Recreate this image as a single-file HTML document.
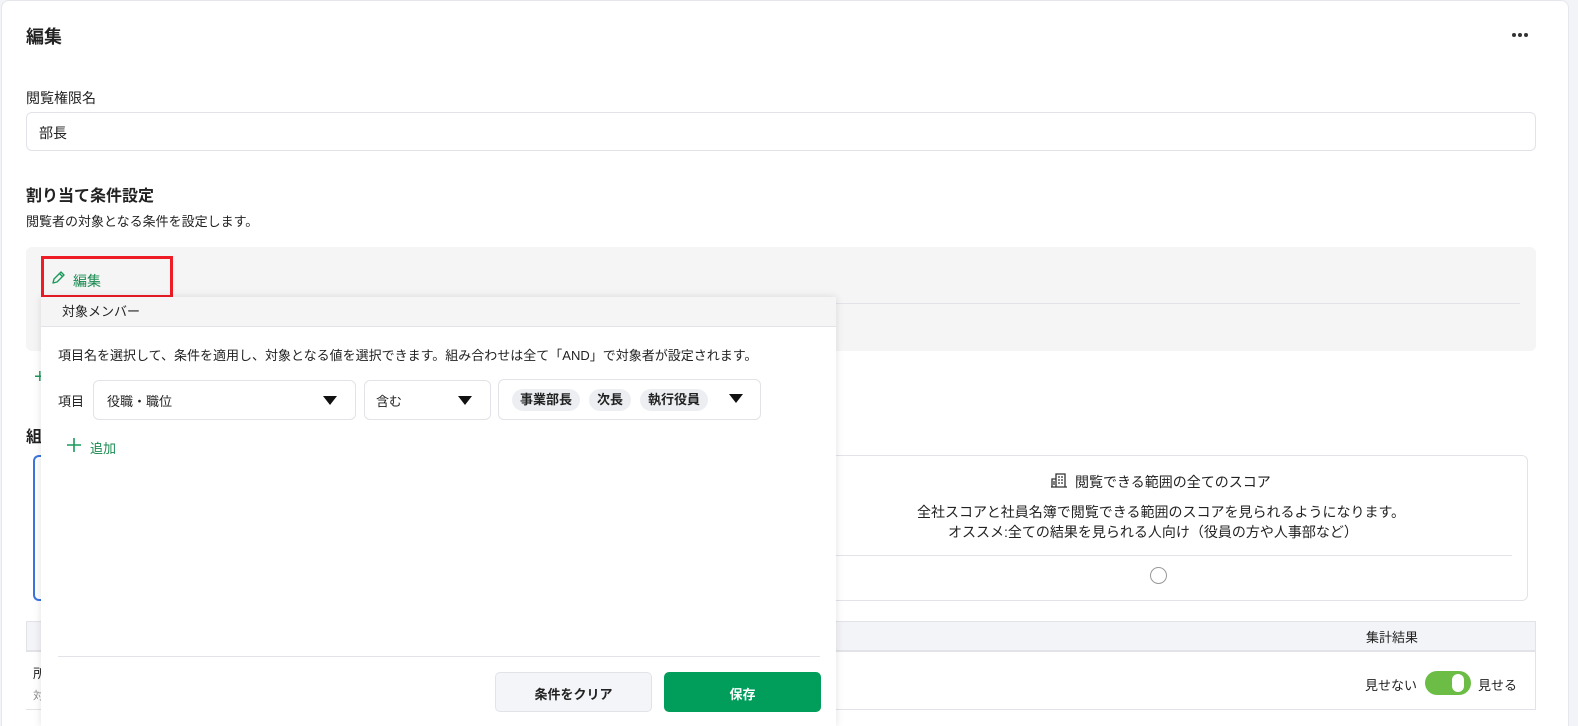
<!DOCTYPE html>
<html style="overflow:hidden;height:726px"><head><meta charset="utf-8"><style>
*{box-sizing:border-box;margin:0;padding:0}
body{width:1578px;height:726px;overflow:hidden;background:#f3f4f8;font-family:"Liberation Sans","Noto Sans CJK JP",sans-serif;color:#222;position:relative}
.a{position:absolute}
.card{left:1px;top:0;width:1568px;height:726px;background:#fff;border-radius:8px 8px 0 0;border:1px solid #e6e7ec;border-bottom:none}
.t{font-size:14px;white-space:nowrap}
</style></head><body>
<div class="a card"></div>
<div class="a t" style="left:26px;top:23px;font-size:18px;font-weight:bold">編集</div>
<div class="a" style="left:1512px;top:33px;display:flex;gap:2px"><i style="width:4px;height:4px;border-radius:2px;background:#333;display:block"></i><i style="width:4px;height:4px;border-radius:2px;background:#333;display:block"></i><i style="width:4px;height:4px;border-radius:2px;background:#333;display:block"></i></div>
<div class="a t" style="left:26px;top:88px">閲覧権限名</div>
<div class="a" style="left:26px;top:112px;width:1510px;height:39px;border:1px solid #e2e3e8;border-radius:6px"></div>
<div class="a t" style="left:39px;top:123px">部長</div>
<div class="a t" style="left:26px;top:182px;font-size:16px;font-weight:bold">割り当て条件設定</div>
<div class="a t" style="left:26px;top:211px;font-size:13px">閲覧者の対象となる条件を設定します。</div>
<div class="a" style="left:26px;top:247px;width:1510px;height:104px;background:#f5f5f6;border-radius:6px"></div>
<div class="a" style="left:170px;top:303px;width:1350px;height:1px;background:#e2e3e8"></div>
<div class="a" style="left:41px;top:256px;width:132px;height:42px;border:3px solid #ee1c24"></div>
<svg class="a" style="left:50px;top:270px" width="16" height="16" viewBox="0 0 16 16"><path d="M3 13l1-4 7-7 3 3-7 7z M9.5 3.5l3 3" fill="none" stroke="#1a9a5a" stroke-width="1.4" stroke-linejoin="round"/></svg>
<div class="a t" style="left:73px;top:271px;color:#1a8a50;font-size:14px">編集</div>
<div class="a t" style="left:34px;top:366px;color:#1a9a5a;font-size:20px">+</div>
<div class="a t" style="left:26px;top:423px;font-size:16px;font-weight:bold">組</div>
<div class="a" style="left:33px;top:455px;width:40px;height:146px;border:2px solid #3b73e0;border-right:none;border-radius:6px 0 0 6px"></div>
<div class="a" style="left:800px;top:455px;width:728px;height:146px;border:1px solid #e2e3e8;border-radius:6px;background:#fff"></div>
<svg class="a" style="left:1050px;top:472px" width="18" height="16" viewBox="0 0 18 16"><path d="M1 15h16M2 15V7h4v8M6 15V2h9v13M8 5h2M11 5h2M8 8h2M11 8h2M8 11h2M11 11h2M3 10h2M3 12h2" fill="none" stroke="#333" stroke-width="1.3"/></svg>
<div class="a t" style="left:1075px;top:472px">閲覧できる範囲の全てのスコア</div>
<div class="a t" style="left:917px;top:502px">全社スコアと社員名簿で閲覧できる範囲のスコアを見られるようになります。</div>
<div class="a t" style="left:948px;top:522px">オススメ:全ての結果を見られる人向け（役員の方や人事部など）</div>
<div class="a" style="left:830px;top:555px;width:682px;height:1px;background:#e2e3e8"></div>
<div class="a" style="left:1150px;top:567px;width:17px;height:17px;border:1.5px solid #999;border-radius:50%"></div>
<div class="a" style="left:26px;top:621px;width:1510px;height:31px;background:#f3f4f8;border:1px solid #e2e3e8;border-bottom:2px solid #e2e3e8"></div>
<div class="a t" style="left:1366px;top:627px;font-size:13px">集計結果</div>
<div class="a" style="left:26px;top:652px;width:1510px;height:58px;border-bottom:1px solid #e2e3e8;border-right:1px solid #e2e3e8"></div>
<div class="a t" style="left:33px;top:663px;font-size:13px">所</div>
<div class="a t" style="left:33px;top:687px;font-size:11px;color:#888">対</div>
<div class="a t" style="left:1365px;top:675px;font-size:13px">見せない</div>
<div class="a" style="left:1425px;top:671px;width:46px;height:24px;border-radius:12px;background:#6cbd45"></div>
<div class="a" style="left:1452px;top:674px;width:12px;height:18px;border-radius:6px;background:#fff"></div>
<div class="a t" style="left:1478px;top:675px;font-size:13px">見せる</div>

<div class="a" style="left:41px;top:297px;width:795px;height:429px;background:#fff;box-shadow:0 0 8px rgba(0,0,0,.12)"></div>
<div class="a" style="left:41px;top:297px;width:795px;height:30px;background:#f5f5f6;border-bottom:1px solid #e2e3e8"></div>
<div class="a t" style="left:62px;top:301px;font-size:13px">対象メンバー</div>
<div class="a t" style="left:58px;top:345px;font-size:13px">項目名を選択して、条件を適用し、対象となる値を選択できます。組み合わせは全て「AND」で対象者が設定されます。</div>
<div class="a t" style="left:58px;top:391px;font-size:13px">項目</div>
<div class="a" style="left:93px;top:380px;width:263px;height:40px;border:1px solid #e2e3e8;border-radius:6px"></div>
<div class="a t" style="left:107px;top:391px;font-size:13px">役職・職位</div>
<div class="a" style="left:364px;top:380px;width:127px;height:40px;border:1px solid #e2e3e8;border-radius:6px"></div>
<div class="a t" style="left:376px;top:391px;font-size:13px">含む</div>
<div class="a" style="left:498px;top:379px;width:263px;height:41px;border:1px solid #e2e3e8;border-radius:6px"></div>
<div class="a t" style="left:512px;top:389px;height:22px;padding:3px 8px;border-radius:11px;background:#eceef2;font-size:13px;font-weight:bold;line-height:16px">事業部長</div>
<div class="a t" style="left:589px;top:389px;height:22px;padding:3px 8px;border-radius:11px;background:#eceef2;font-size:13px;font-weight:bold;line-height:16px">次長</div>
<div class="a t" style="left:640px;top:389px;height:22px;padding:3px 8px;border-radius:11px;background:#eceef2;font-size:13px;font-weight:bold;line-height:16px">執行役員</div>
<svg class="a" style="left:323px;top:396px" width="14" height="9"><path d="M0 0h14L7 9z" fill="#111"/></svg>
<svg class="a" style="left:458px;top:396px" width="14" height="9"><path d="M0 0h14L7 9z" fill="#111"/></svg>
<svg class="a" style="left:729px;top:394px" width="14" height="9"><path d="M0 0h14L7 9z" fill="#111"/></svg>
<svg class="a" style="left:66px;top:437px" width="16" height="16"><path d="M8 1v14M1 8h14" stroke="#1a9a5a" stroke-width="1.6"/></svg>
<div class="a t" style="left:90px;top:438px;color:#1a8a50;font-size:13px">追加</div>
<div class="a" style="left:58px;top:656px;width:762px;height:1px;background:#e2e3e8"></div>
<div class="a" style="left:495px;top:672px;width:157px;height:40px;border:1px solid #e2e3e8;border-radius:5px;background:#f4f5f8"></div>
<div class="a t" style="left:495px;top:684px;width:157px;text-align:center;font-size:13px;font-weight:bold">条件をクリア</div>
<div class="a" style="left:664px;top:672px;width:157px;height:40px;border-radius:5px;background:#019e5b"></div>
<div class="a t" style="left:664px;top:684px;width:157px;text-align:center;font-size:13px;font-weight:bold;color:#fff">保存</div>
</body></html>
